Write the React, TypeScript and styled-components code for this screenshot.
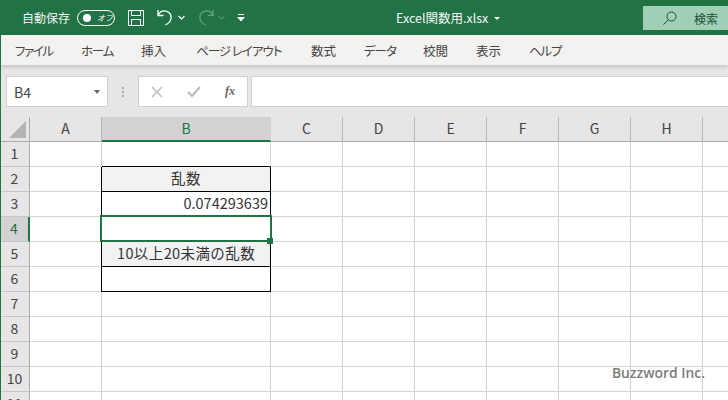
import React from "react";
import styled, { createGlobalStyle } from "styled-components";

const Global = createGlobalStyle`
  html, body { margin: 0; padding: 0; background: #fff; }
  #root { width: 728px; height: 400px; overflow: hidden; }
  * { box-sizing: border-box; }
`;
const FONT = `"Noto Sans CJK JP", "Noto Sans", sans-serif`;

const Page = styled.div`
  width: 728px; height: 400px; overflow: hidden; display: flex; flex-direction: column;
  font-family: ${FONT}; background: #e6e6e6; border-left: 1px solid #217346;
`;
const TitleBar = styled.div`
  height: 35px; margin-left: -1px; background: #217346; color: #fff; display: flex; align-items: center;
  flex: none; position: relative;
`;
const AutoSave = styled.span`font-size: 12px; margin-left: 22px; width: 55px; white-space: nowrap; line-height: 35px; opacity: .95;`;
const Toggle = styled.span`
  width: 38px; height: 16px; border: 1px solid #fff; border-radius: 8px; display: flex; align-items: center;
  padding-left: 5px; gap: 6px; font-size: 8px; font-style: italic; margin-right: 13px;
`;
const Knob = styled.i`width: 8px; height: 8px; border-radius: 50%; background: #fff; display: block; flex: none;`;
const ToolIcon = styled.svg<{ $ml?: number }>`display: block; flex: none; margin-left: ${p => p.$ml ?? 0}px;`;
const FileName = styled.span`
  position: absolute; left: 396px; top: 0; height: 35px; display: flex; align-items: center; gap: 6px;
  font-size: 12.5px; white-space: nowrap; color: #f2f7f4;
`;
const FileCaret = styled.i`
  width: 0; height: 0; border-left: 3px solid transparent; border-right: 3px solid transparent;
  border-top: 3px solid #fff; display: block; margin-top: 2px;
`;
const SearchBox = styled.div`
  position: absolute; left: 643px; top: 6px; width: 85px; height: 24px; background: #9fd0b5; color: #1d4f37;
  display: flex; align-items: center; padding-left: 20px; font-size: 12px; gap: 17px;
`;
const Tabs = styled.div`
  height: 30px; flex: none; background: #f3f2f1; display: flex; align-items: center; font-size: 12.5px; color: #444;
  box-shadow: 0 2px 4px rgba(0,0,0,.16); position: relative; margin-left: -1px; padding-left: 15px;
`;
const Tab = styled.span<{ $w: number; $tight?: number }>`
  width: ${p => p.$w}px; flex: none; white-space: nowrap; font-feature-settings: "palt";
  letter-spacing: ${p => p.$tight ?? 0}px;
`;
const FormulaBar = styled.div`
  height: 52px; flex: none; display: flex; padding: 11px 0 0 5px; align-items: flex-start; background: #e6e6e6;
`;
const Field = styled.div<{ $w: number }>`
  width: ${p => p.$w}px; height: 31px; background: #fff; border: 1px solid #d0d0d0; flex: none; display: flex; align-items: center;
`;
const NameText = styled.span`flex: 1; font-size: 14px; color: #444; padding-left: 7px;`;
const Caret = styled.i`
  width: 0; height: 0; border-left: 3.5px solid transparent; border-right: 3.5px solid transparent;
  border-top: 4px solid #666; margin-right: 7px; display: block;
`;
const Dots = styled.div`
  width: 30px; flex: none; height: 31px; display: flex; flex-direction: column; justify-content: center; align-items: center; gap: 2px;
  & i { width: 2px; height: 2px; background: #aaa; display: block; }
`;
const FxField = styled(Field)`justify-content: space-between; padding: 0 12px; margin-right: 3px;`;
const Fx = styled.span`font-family: "Liberation Serif", serif; font-style: italic; font-weight: 700; font-size: 12px; color: #666;`;

const Sheet = styled.div`
  flex: 1; display: grid; background: #fff; grid-template-columns: 29px 72px 169px repeat(7, 72px);
  grid-template-rows: 25px; grid-auto-rows: 25px; position: relative; overflow: hidden;
`;
const Corner = styled.div`
  background: #e6e6e6; border-right: 1px solid #ababab; border-bottom: 1px solid #ababab; position: relative;
`;
const CornerMark = styled.svg`position: absolute; right: 3px; bottom: 3px; display: block;`;
const ColHead = styled.div<{ $on?: boolean }>`
  background: ${p => p.$on ? "#d2d2d2" : "#e6e6e6"}; color: ${p => p.$on ? "#217346" : "#444"};
  border-right: 1px solid ${p => p.$on ? "#d2d2d2" : "#b9b9b9"};
  border-bottom: ${p => p.$on ? "2px solid #217346" : "1px solid #ababab"};
  font-size: 14px; display: flex; align-items: center; justify-content: center; padding-bottom: 2px;
`;
const RowHead = styled.div<{ $on?: boolean }>`
  background: ${p => p.$on ? "#d2d2d2" : "#e6e6e6"}; color: ${p => p.$on ? "#217346" : "#444"};
  border-right: ${p => p.$on ? "2px solid #217346" : "1px solid #ababab"};
  border-bottom: 1px solid #c6c6c6; font-size: 14px; display: flex; align-items: center; justify-content: center;
  padding-right: 1px; padding-bottom: 3px;
`;
const Cell = styled.div<{ $boxed?: boolean; $fill?: boolean; $right?: boolean; $edge?: boolean }>`
  border-right: 1px solid ${p => p.$boxed ? "#000" : "#d4d4d4"};
  border-bottom: 1px solid ${p => (p.$boxed || p.$edge) ? "#000" : "#d4d4d4"};
  ${p => p.$boxed ? "box-shadow: -1px 0 0 #000;" : ""}
  background: ${p => p.$fill ? "#f2f2f2" : "#fff"};
  font-size: 14.5px; color: #333; display: flex; align-items: center; white-space: nowrap;
  letter-spacing: ${p => p.$fill ? ".4px" : "0"};
  justify-content: ${p => p.$right ? "flex-end" : "center"};
  padding-right: ${p => p.$right ? "2px" : "0"}; padding-bottom: 3px;
`;
const Selection = styled.div`
  position: absolute; left: 99px; top: 98px; width: 172px; height: 27px; border: 2px solid #217346;
`;
const Handle = styled.i`
  position: absolute; right: -3px; bottom: -4px; width: 6px; height: 6px; background: #217346; display: block;
`;
const Watermark = styled.div`
  position: absolute; right: 23px; bottom: 18px; font-family: "Open Sans", sans-serif; font-size: 13.9px; font-weight: 600;
  color: #7c7c7c;
`;

const columns = ["A", "B", "C", "D", "E", "F", "G", "H", ""];
const rows = Array.from({ length: 11 }, (_, i) => i + 1);
const bContent: Record<number, { text?: string; fill?: boolean; right?: boolean; boxed?: boolean; edge?: boolean }> = {
  1: { edge: true },
  2: { text: "乱数", fill: true, boxed: true },
  3: { text: "0.074293639", right: true, boxed: true },
  4: { boxed: true },
  5: { text: "10以上20未満の乱数", fill: true, boxed: true },
  6: { boxed: true },
};
const tabs: [string, number, number][] = [
  ["ファイル", 66, -1.4], ["ホーム", 60, -1.2], ["挿入", 55, 0], ["ページ レイアウト", 115, -1], ["数式", 53, 0],
  ["データ", 59, -1], ["校閲", 53, 0], ["表示", 53, 0], ["ヘルプ", 60, -1.2],
];

export default function App() {
  return (
    <Page>
      <Global />
      <TitleBar>
        <AutoSave>自動保存</AutoSave>
        <Toggle><Knob /><span>オフ</span></Toggle>
        <ToolIcon width="16" height="16" viewBox="0 0 16 16" fill="none" stroke="#fff" strokeWidth="1">
          <path d="M.5.5h15v15H.5zM3.500.5v5h9v-5M3.500 15.500v-6h9v6" />
        </ToolIcon>
        <ToolIcon $ml={13} width="16" height="17" viewBox="0 0 16 17" fill="none" stroke="#fff" strokeWidth="1.300">
          <path d="M1 1v5.500h5.500M1.300 6C3 2.500 6 1.500 9 2.200c3.500 1 5.500 4 5 7.300-.5 3-2.500 5-5.500 6.500" />
        </ToolIcon>
        <ToolIcon $ml={5} width="7" height="5" viewBox="0 0 7 5" fill="none" stroke="#fff" strokeWidth="1.200">
          <path d="M.5 1l3 3 3-3" />
        </ToolIcon>
        <ToolIcon $ml={13} width="16" height="17" viewBox="0 0 16 17" fill="none" stroke="#6aa387" strokeWidth="1.200">
          <path d="M15 1v5.500H9.500M14.700 6C13 2.500 10 1.500 7 2.200c-3.500 1-5.500 4-5 7.300.5 3 2.500 5 5.500 6.500" />
        </ToolIcon>
        <ToolIcon $ml={4} width="7" height="5" viewBox="0 0 7 5" fill="none" stroke="#6aa387" strokeWidth="1">
          <path d="M.5 1l3 3 3-3" />
        </ToolIcon>
        <ToolIcon $ml={12} width="8" height="8" viewBox="0 0 8 8" fill="#fff">
          <path d="M1 0h6v1H1zM0 3h8L4 7.500z" />
        </ToolIcon>
        <FileName>Excel関数用.xlsx<FileCaret /></FileName>
        <SearchBox>
          <ToolIcon width="14" height="14" viewBox="0 0 14 14" fill="none" stroke="#1d4f37" strokeWidth="1">
            <circle cx="8.500" cy="5.500" r="4.500" />
            <path d="M5.300 8.800L.5 13.500" />
          </ToolIcon>
          <span>検索</span>
        </SearchBox>
      </TitleBar>
      <Tabs>
        {tabs.map(([label, w, t]) => <Tab key={label} $w={w} $tight={t}>{label}</Tab>)}
      </Tabs>
      <FormulaBar>
        <Field $w={102}><NameText>B4</NameText><Caret /></Field>
        <Dots><i /><i /><i /></Dots>
        <FxField $w={110}>
          <ToolIcon width="12" height="12" viewBox="0 0 12 12" fill="none" stroke="#bbb" strokeWidth="1.400"><path d="M1 1l10 10M11 1L1 11" /></ToolIcon>
          <ToolIcon width="14" height="12" viewBox="0 0 14 12" fill="none" stroke="#bbb" strokeWidth="2"><path d="M1 6l4 4 8-9" /></ToolIcon>
          <Fx>fx</Fx>
        </FxField>
        <Field $w={480} />
      </FormulaBar>
      <Sheet>
        <Corner>
          <CornerMark width="17" height="17" viewBox="0 0 17 17"><path d="M17 0v17H0z" fill="#b4b4b4" /></CornerMark>
        </Corner>
        {columns.map((c, i) => <ColHead key={i} $on={c === "B"}>{c}</ColHead>)}
        {rows.map(r => (
          <React.Fragment key={r}>
            <RowHead $on={r === 4}>{r}</RowHead>
            {columns.map((c, i) => {
              const b = c === "B" ? bContent[r] : undefined;
              return (
                <Cell key={i} $boxed={b?.boxed} $fill={b?.fill} $right={b?.right} $edge={b?.edge}>{b?.text}</Cell>
              );
            })}
          </React.Fragment>
        ))}
        <Selection><Handle /></Selection>
        <Watermark>Buzzword Inc.</Watermark>
      </Sheet>
    </Page>
  );
}
